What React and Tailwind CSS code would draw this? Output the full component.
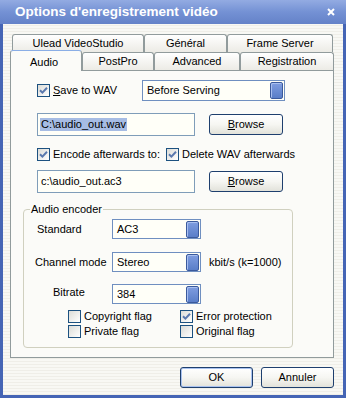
import React from "react";

const Check = ({ checked }) => (
  <span className="w-[13px] h-[13px] border border-[#1c5180] bg-linear-to-br from-[#dcdcd7] to-white flex items-center justify-center shrink-0">
    {checked && (
      <svg width="9" height="9" viewBox="0 0 9 9">
        <path d="M1 4.2 L3.4 6.6 L8 1.8" stroke="#5a78ae" strokeWidth="2" fill="none" />
      </svg>
    )}
  </span>
);

const DropBtn = () => (
  <span className="w-[13px] h-[17px] rounded-[2px] border border-[#3b5a9c] bg-linear-to-b from-[#7f9de0] to-[#5a7ec8] shadow-[inset_1px_1px_0_#a8bff0] shrink-0" />
);

const Select = ({ value, className }) => (
  <div className={`border border-[#6f8fc0] bg-[#fffff8] flex items-center justify-between pl-[4px] pr-[1px] ${className}`}>
    <span>{value}</span>
    <DropBtn />
  </div>
);

const Btn = ({ children, className }) => (
  <div className={`rounded-[3px] border border-[#1e3f6e] bg-linear-to-b from-white via-[#f6f6f2] to-[#e2e2da] flex items-center justify-center ${className}`}>
    {children}
  </div>
);

const Tab = ({ label, className }) => (
  <div className={`h-full border border-b-0 border-[#919b9c] rounded-t-[3px] bg-linear-to-b from-white to-[#ecebe5] flex items-center justify-center ${className}`}>
    {label}
  </div>
);

export default function App() {
  return (
    <div className="w-[346px] h-[398px] flex flex-col font-['Liberation_Sans',Arial,sans-serif] text-[11px] text-black overflow-hidden">
      <div className="h-[24px] shrink-0 bg-linear-to-b from-[#93abe2] via-[#7491d4] to-[#6482c8] flex items-center justify-between pl-[15px] pr-[11px]">
        <span className="text-white font-bold text-[13.5px] leading-none">Options d'enregistrement vidéo</span>
        <svg width="8" height="8" viewBox="0 0 8 8">
          <path d="M1 1 L7 7 M7 1 L1 7" stroke="white" strokeWidth="2" />
        </svg>
      </div>
      <div className="flex-1 flex flex-col border-x-[3px] border-b-[3px] border-[#4565b5] bg-[repeating-linear-gradient(0deg,#efeee8_0px,#efeee8_1px,#f8f8f4_1px,#f8f8f4_3px)] px-[7px] pt-[10px]">
        <div className="h-[18px] flex pl-[2px]">
          <Tab label="Ulead VideoStudio" className="w-[132px]" />
          <Tab label="Général" className="w-[83px]" />
          <Tab label="Frame Server" className="w-[106px]" />
        </div>
        <div className="h-[18px] flex items-end">
          <div className="relative z-10 h-[21px] w-[72px] -mb-[1px] border border-b-0 border-[#919b9c] border-t-[#8aaee6] rounded-t-[3px] bg-[#fbfbf8] flex justify-center pt-[3px] pr-[4px]">
            Audio
          </div>
          <div className="h-[18px] flex">
            <Tab label="PostPro" className="w-[72px]" />
            <Tab label="Advanced" className="w-[86px]" />
            <Tab label="Registration" className="w-[94px]" />
          </div>
        </div>
        <div className="w-[324px] h-[288px] shrink-0 border border-[#919b9c] bg-[#fbfbf8] flex flex-col">
          <div className="ml-[26px] mt-[9px] h-[21px] flex items-center">
            <div className="w-[105px] flex items-center gap-[3px]">
              <Check checked />
              <span><span className="underline">S</span>ave to WAV</span>
            </div>
            <Select value="Before Serving" className="w-[143px] h-[21px]" />
          </div>
          <div className="ml-[26px] mt-[12px] flex items-center">
            <div className="w-[158px] h-[23px] border border-[#7f9db9] bg-[#fffff8] flex items-center pl-[2px]">
              <span className="bg-[#a6bce4] leading-[13px] px-[1px]">C:\audio_out.wav</span>
            </div>
            <Btn className="ml-[14px] w-[74px] h-[21px]"><span><span className="underline">B</span>rowse</span></Btn>
          </div>
          <div className="ml-[26px] mt-[10px] h-[16px] flex items-center">
            <div className="w-[129px] flex items-center gap-[3px]">
              <Check checked />
              <span>Encode afterwards to:</span>
            </div>
            <div className="flex items-center gap-[3px]">
              <Check checked />
              <span>Delete WAV afterwards</span>
            </div>
          </div>
          <div className="ml-[26px] mt-[8px] flex items-center">
            <div className="w-[158px] h-[23px] border border-[#7f9db9] bg-[#fffff8] flex items-center pl-[3px]">
              <span>c:\audio_out.ac3</span>
            </div>
            <Btn className="ml-[14px] w-[74px] h-[21px]"><span><span className="underline">B</span>rowse</span></Btn>
          </div>
          <fieldset className="ml-[12px] mt-[10px] w-[270px] h-[145px] border border-[#d0d0bf] rounded-[4px] flex flex-col">
            <legend className="ml-[6px] px-[1px] leading-[12px]">Audio encoder</legend>
            <div className="mt-[4px] h-[20px] flex items-center">
              <span className="ml-[13px] w-[75px]">Standard</span>
              <Select value="AC3" className="w-[89px] h-[20px]" />
            </div>
            <div className="mt-[13px] h-[20px] flex items-center">
              <span className="ml-[11px] w-[77px]">Channel mode</span>
              <Select value="Stereo" className="w-[89px] h-[20px]" />
              <span className="ml-[8px]">kbit/s (k=1000)</span>
            </div>
            <div className="mt-[12px] h-[20px] flex items-center">
              <span className="ml-[29px] w-[59px] mb-[3px]">Bitrate</span>
              <Select value="384" className="w-[89px] h-[20px]" />
            </div>
            <div className="mt-[5px] h-[14px] flex items-center ml-[44px]">
              <div className="w-[112px] flex items-center gap-[3px]">
                <Check />
                <span>Copyright flag</span>
              </div>
              <div className="flex items-center gap-[3px]">
                <Check checked />
                <span>Error protection</span>
              </div>
            </div>
            <div className="mt-[1px] h-[14px] flex items-center ml-[44px]">
              <div className="w-[112px] flex items-center gap-[3px]">
                <Check />
                <span>Private flag</span>
              </div>
              <div className="flex items-center gap-[3px]">
                <Check />
                <span>Original flag</span>
              </div>
            </div>
          </fieldset>
        </div>
        <div className="w-[324px] mt-[9px] flex justify-end gap-[8px]">
          <Btn className="w-[73px] h-[21px] shadow-[inset_0_0_0_1px_#a9c2ef]">OK</Btn>
          <Btn className="w-[73px] h-[21px]">Annuler</Btn>
        </div>
      </div>
    </div>
  );
}
